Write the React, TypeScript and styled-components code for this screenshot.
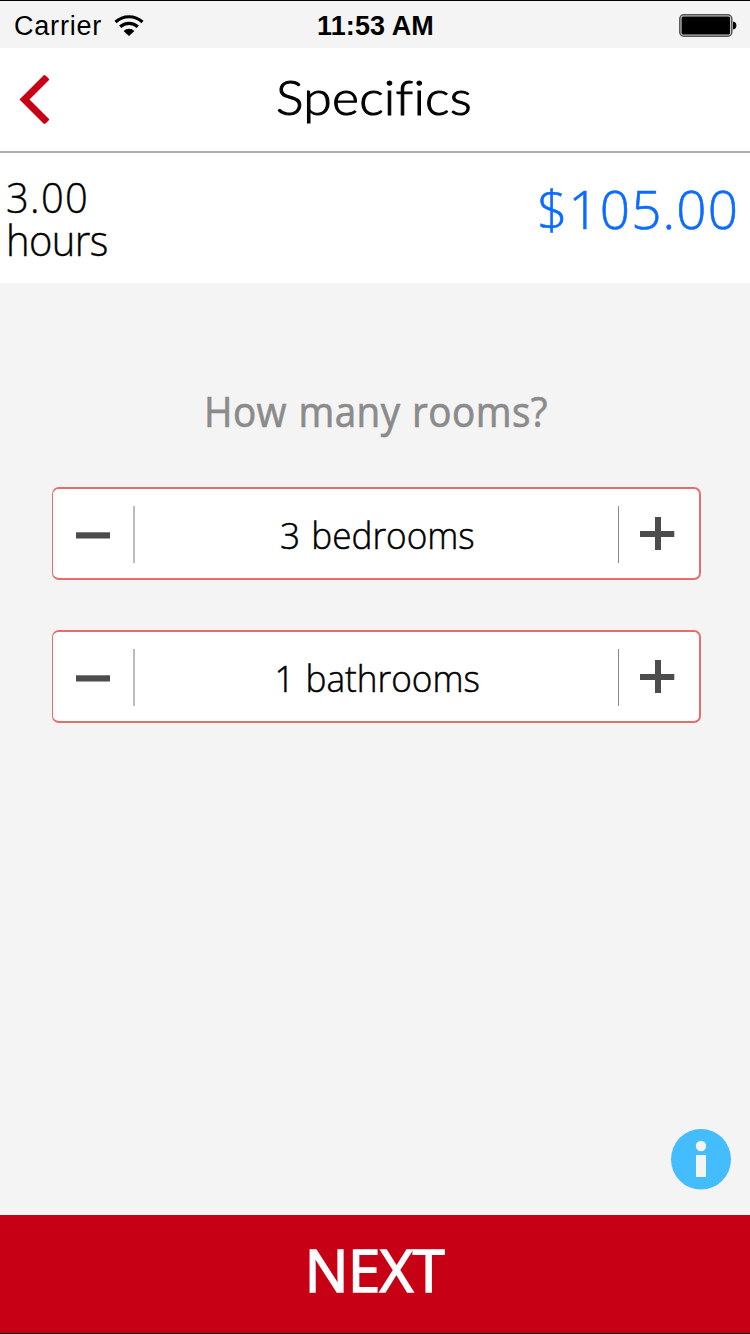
import React, { useState } from "react";
import styled, { createGlobalStyle } from "styled-components";

const Global = createGlobalStyle`
  * { box-sizing: border-box; }
  body { margin: 0; background: #f4f4f4; }
  button { border: 0; padding: 0; margin: 0; background: none; font: inherit; color: inherit; }
`;

const Screen = styled.div`
  width: 750px;
  height: 1334px;
  display: flex;
  flex-direction: column;
  overflow: hidden;
  background: #f4f4f4;
  border-top: 1px solid #000;
  border-bottom: 1px solid #000;
  font-family: "Open Sans", "Noto Sans", sans-serif;
  color: #000;
`;

/* Condenses or widens a run of text without touching its height. */
const Fit = styled.span<{ $scale: number }>`
  display: inline-block;
  white-space: nowrap;
  transform: scaleX(${(p) => p.$scale});
`;

const StatusBar = styled.div`
  height: 47px;
  flex: none;
  display: grid;
  grid-template-columns: 1fr auto 1fr;
  align-items: center;
  padding: 2px 13px 0 14px;
  font: 27px/40px "Liberation Sans", Arial, sans-serif;
`;

const Carrier = styled.div`
  display: flex;
  align-items: center;
  gap: 12px;
  letter-spacing: 0.8px;
`;

const Clock = styled.div`
  font-weight: 700;
  letter-spacing: 0.1px;
`;

const BatterySlot = styled.div`
  display: flex;
  justify-content: flex-end;
`;

const Header = styled.header`
  height: 105px;
  flex: none;
  display: grid;
  grid-template-columns: 80px 1fr 80px;
  align-items: center;
  background: #fff;
  border-bottom: 2px solid #b0b0b0;
`;

const BackButton = styled.button`
  display: flex;
  padding-left: 19px;
`;

const Title = styled.h1`
  margin: 0;
  text-align: center;
  font: 300 47px/60px Lato, sans-serif;
  letter-spacing: 0.2px;
  padding: 0 2px 6px 0;
  -webkit-text-stroke: 1px #000;
`;

const Summary = styled.section`
  height: 130px;
  flex: none;
  display: flex;
  justify-content: space-between;
  background: #fff;
  padding: 22px 12px 0 6px;
  font-weight: 300;
`;

const Duration = styled.div`
  width: 120px;
  font-size: 42px;
  line-height: 43px;
  letter-spacing: -0.6px;
  transform: scaleX(0.95);
  transform-origin: left center;
  -webkit-text-stroke: 0.4px #000;

  &::first-line {
    letter-spacing: 1.4px;
  }
`;

const Price = styled.div`
  font-size: 53px;
  line-height: 68px;
  letter-spacing: 1.1px;
  margin-right: -1px;
  color: #0a6cff;
  -webkit-text-stroke: 0.6px #0a6cff;
`;

const Content = styled.main`
  flex: 1;
  display: flex;
  flex-direction: column;
  padding: 98px 49px 0 52px;
`;

const Question = styled.h2`
  margin: 0 2px 46px 0;
  text-align: center;
  font-size: 42px;
  line-height: 60px;
  font-weight: 400;
  letter-spacing: 0.5px;
  word-spacing: 1px;
  color: #8b8b8b;
  -webkit-text-stroke: 0.7px #8b8b8b;
`;

const Stepper = styled.div`
  height: 93px;
  margin-bottom: 50px;
  display: flex;
  align-items: center;
  background: #fff;
  border: 2px solid #e46e6e;
  border-left-width: 1px;
  border-radius: 7px;
`;

const StepButton = styled.button`
  width: 80px;
  display: flex;
  justify-content: center;
`;

const Divider = styled.div<{ $width: number; $color: string }>`
  width: ${(p) => p.$width}px;
  height: 57px;
  margin-top: 1px;
  background: ${(p) => p.$color};
`;

const Value = styled.div`
  flex: 1;
  text-align: center;
  font-size: 37px;
  line-height: 50px;
  font-weight: 300;
  word-spacing: 2px;
  padding: 2px 0 0 1px;
  -webkit-text-stroke: 0.5px #000;
`;

const InfoButton = styled.button`
  display: flex;
  align-self: flex-end;
  margin: auto -30px 25px 0;
`;

const NextButton = styled.button`
  && {
    height: 118px;
    flex: none;
    background: #c80016;
    color: #fff;
    font-size: 58px;
    font-weight: 400;
    line-height: 80px;
    letter-spacing: -0.5px;
    padding: 0 1px 8px 0;
    -webkit-text-stroke: 1.6px #fff;
  }
`;

const WifiIcon = () => (
  <svg width="30" height="22" viewBox="0 0 30 22">
    <g fill="none" stroke="#000" strokeWidth="3.2">
      <path d="M1.5 7 A20 20 0 0 1 28.5 7" />
      <path d="M6.2 11.8 A13 13 0 0 1 23.8 11.8" />
    </g>
    <path d="M9.6 16 A7.8 7.8 0 0 1 20.4 16 L15 21 Z" />
  </svg>
);

const BatteryIcon = () => (
  <svg width="58" height="23" viewBox="0 0 58 23">
    <rect x="0.8" y="0.8" width="52" height="21.4" rx="4" fill="#ccc" stroke="#555" strokeWidth="1.5" />
    <rect x="2.6" y="2.6" width="48.4" height="17.8" rx="1.5" />
    <path d="M54 7.4 q3.4 0.6 3.4 4.1 q0 3.5 -3.4 4.1 Z" />
  </svg>
);

const BackIcon = () => (
  <svg width="31" height="50" viewBox="0 0 31 50" fill="#c80016">
    <path d="M0.5 24.5 L25 0 Q26.5 0 30 4 V5 L10.5 24.5 L30 44 V45 Q26.5 49 25 49 Z" />
  </svg>
);

const MinusIcon = () => (
  <svg width="34" height="34" viewBox="0 0 34 34">
    <rect x="0" y="15.3" width="34" height="6.2" fill="#4c4c4c" />
  </svg>
);

const PlusIcon = () => (
  <svg width="38" height="34" viewBox="0 0 38 34" fill="#4c4c4c">
    <rect x="0" y="14" width="34.3" height="6" />
    <rect x="15" y="0" width="6" height="33" />
  </svg>
);

const InfoIcon = () => (
  <svg width="60" height="61" viewBox="0 0 60 61">
    <ellipse cx="30" cy="30.3" rx="30" ry="30.3" fill="#43bdfd" />
    <circle cx="30" cy="17" r="5.2" fill="#f4f4f4" />
    <rect x="25" y="26" width="10" height="22" fill="#f4f4f4" />
  </svg>
);

function RoomStepper({ initial, unit }: { initial: number; unit: string }) {
  const [count, setCount] = useState(initial);
  return (
    <Stepper>
      <StepButton aria-label={`Fewer ${unit}`} onClick={() => setCount(Math.max(0, count - 1))}>
        <MinusIcon />
      </StepButton>
      <Divider $width={2} $color="#bcbcbc" />
      <Value>
        <Fit $scale={0.95}>
          {count} {unit}
        </Fit>
      </Value>
      <Divider $width={1} $color="#8a8a8a" />
      <StepButton aria-label={`More ${unit}`} onClick={() => setCount(count + 1)}>
        <PlusIcon />
      </StepButton>
    </Stepper>
  );
}

export default function App() {
  return (
    <Screen>
      <Global />
      <StatusBar>
        <Carrier>
          Carrier
          <WifiIcon />
        </Carrier>
        <Clock>11:53 AM</Clock>
        <BatterySlot>
          <BatteryIcon />
        </BatterySlot>
      </StatusBar>
      <Header>
        <BackButton aria-label="Back">
          <BackIcon />
        </BackButton>
        <Title>
          <Fit $scale={1.1}>Specifics</Fit>
        </Title>
      </Header>
      <Summary>
        <Duration>3.00 hours</Duration>
        <Price>$105.00</Price>
      </Summary>
      <Content>
        <Question>
          <Fit $scale={0.92}>How many rooms?</Fit>
        </Question>
        <RoomStepper initial={3} unit="bedrooms" />
        <RoomStepper initial={1} unit="bathrooms" />
        <InfoButton aria-label="Info">
          <InfoIcon />
        </InfoButton>
      </Content>
      <NextButton>NEXT</NextButton>
    </Screen>
  );
}
